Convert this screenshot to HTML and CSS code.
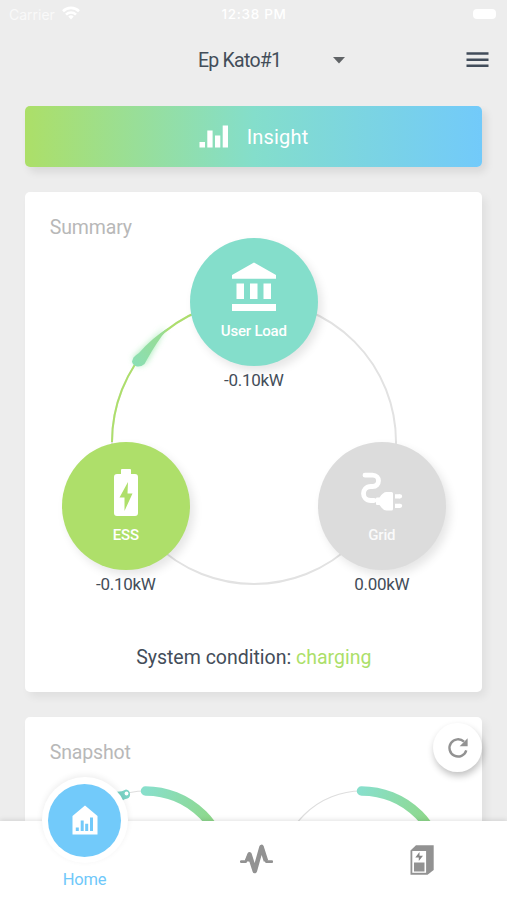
FILE: index.html
```html
<!DOCTYPE html>
<html lang="en">
<head>
<meta charset="utf-8">
<meta name="viewport" content="width=device-width, initial-scale=1">
<title>Energy Home</title>
<link rel="stylesheet" href="styles.css">
</head>
<body>
<div class="screen">
  <div class="status">
    <div class="carrier"><span>Carrier</span>
      <svg width="18" height="14" viewBox="0 0 18 14" fill="none" stroke="#fff" stroke-width="2.6"><path d="M1 5.2a11.4 11.4 0 0 1 16 0M4 8.6a7 7 0 0 1 10 0"/><path d="M6.3 10.6a3.8 3.8 0 0 1 5.4 0L9 13.6z" fill="#fff" stroke="none"/></svg>
    </div>
    <span class="time">12:38 PM</span>
    <span class="battery"></span>
  </div>
  <header class="header">
    <div class="site"><span>Ep Kato#1</span><svg width="12" height="7" viewBox="0 0 12 7"><path d="M0 0h12L6 6.5z" fill="#606366"/></svg></div>
    <svg class="menu" width="23" height="16" viewBox="0 0 23 16"><path d="M.5 1.6h22M.5 7.7h22M.5 13.8h22" stroke="#414c5a" stroke-width="2.5"/></svg>
  </header>
  <main class="content">
    <a class="insight">
      <svg width="30" height="23" viewBox="0 0 30 23" fill="#fff"><path d="M.5 17H6v5.4H.5zM8.3 5.4h5.3v17H8.3zM16 10.6h5.3v11.8H16zM23.7.4H29v22h-5.3z"/></svg>
      <span>Insight</span>
    </a>
    <section class="card summary">
      <h2>Summary</h2>
      <div class="flow">
        <svg class="ring" width="384" height="360" viewBox="0 0 384 360" fill="none">
          <defs><filter id="glow" x="-60%" y="-60%" width="220%" height="220%"><feGaussianBlur stdDeviation="3.2"/></filter>
          <linearGradient id="drop" x1="0" y1="1" x2="1" y2="0"><stop stop-color="#8adfb7"/><stop offset="1" stop-color="#9adc8c"/></linearGradient></defs>
          <circle cx="192" cy="204" r="142" stroke="#e2e2e2" stroke-width="2"/>
          <path d="M50 204A142 142 0 0 1 192 62" stroke="#addf6b" stroke-width="2"/>
          <path d="M71 120 104 89 84 125 75 128z" fill="#91e6a5" opacity=".8" filter="url(#glow)"/>
          <path d="M70 123.500L71.500 119.500Q73 117.500 77 115Q90 100 106 90Q94 105 85 121.500L82.500 126Q79 129 75 128.500Q70.500 127 70 123.500Z" fill="url(#drop)"/>
        </svg>
        <div class="node load">
          <div class="disc">
            <svg width="46" height="50" viewBox="0 0 46 50" fill="#fff"><path d="M23 .5 45 13v3.700H1V13zM5.500 21.500H13V37H5.500zM19 21.500h7.500V37H19zM32.500 21.500H40V37h-7.500zM1 42h44v7H1z"/></svg>
            <b>User Load</b>
          </div>
          <span>-0.10kW</span>
        </div>
        <div class="node ess">
          <div class="disc">
            <svg width="24" height="47" viewBox="0 0 24 47"><path d="M8 0h8q1 0 1 1v4h4q3 0 3 3v36q0 3-3 3H3q-3 0-3-3V8q0-3 3-3h4V1q0-1 1-1z" fill="#fff"/><path d="M14 13 5.500 28.500h5V42L18.500 24.500h-5z" fill="#aedf6a"/></svg>
            <b>ESS</b>
          </div>
          <span>-0.10kW</span>
        </div>
        <div class="node grid">
          <div class="disc">
            <svg width="44" height="40" viewBox="0 0 44 40"><path d="M5 4.200H12.500C20.500 4.200 20.500 15.500 12.500 15.500H11C1 15.500 1 29.500 11 29.500H14" fill="none" stroke="#fff" stroke-width="4.800" stroke-linecap="round"/><path d="M17 26.500h2.500q3.500-5.500 7-5.500h5q1.500 0 1.500 1.500V38q0 1.500-1.500 1.500h-5q-3.500 0-7-5.500H17q-1 0-1-1v-5.500q0-1 1-1z" fill="#fff"/><path d="M35 25.300h5M35 34.800h5" stroke="#fff" stroke-width="4.200"/><path d="M40 25.300h.1M40 34.800h.1" stroke="#fff" stroke-width="4.200" stroke-linecap="round"/></svg>
            <b>Grid</b>
          </div>
          <span>0.00kW</span>
        </div>
      </div>
      <p class="condition">System condition: <em>charging</em></p>
    </section>
    <section class="card snapshot">
      <h2>Snapshot</h2>
      <svg class="gauges" width="457" height="64" viewBox="0 0 457 64" fill="none">
        <defs><linearGradient id="g1" gradientUnits="userSpaceOnUse" x1="120" y1="8" x2="186" y2="44"><stop stop-color="#88dfcb"/><stop offset="1" stop-color="#8fd889"/></linearGradient>
        <linearGradient id="g2" gradientUnits="userSpaceOnUse" x1="336" y1="8" x2="402" y2="44"><stop stop-color="#88dfcb"/><stop offset="1" stop-color="#8fd889"/></linearGradient></defs>
        <circle cx="120.500" cy="90" r="81" stroke="#dedede" stroke-width="1.200"/>
        <circle cx="336.500" cy="90" r="81" stroke="#dedede" stroke-width="1.200"/>
        <path d="M120.500 9A81 81 0 0 1 201.500 90" stroke="url(#g1)" stroke-width="9.500" stroke-linecap="round"/>
        <path d="M336.500 9A81 81 0 0 1 417.500 90" stroke="url(#g2)" stroke-width="9.500" stroke-linecap="round"/>
        <path d="M88 9.500Q96 10.500 101 7.500A4.800 4.800 0 0 1 102.500 16.500Q97 17.500 91 24z" fill="#7bd3c6"/><circle cx="101.500" cy="11.500" r="1.900" fill="#fff"/>
      </svg>
      <button class="refresh" aria-label="Refresh"><svg width="22" height="22" viewBox="0 0 22 22" fill="none"><path d="M19.300 13.400A8.600 8.600 0 1 1 17 4.700" stroke="#929292" stroke-width="2.400"/><path d="M20.600 1.300v8h-8z" fill="#929292"/></svg></button>
    </section>
  </main>
  <nav class="tabs">
    <a class="tab home">
      <div class="bubble"><div class="dot">
        <svg width="26" height="30" viewBox="0 0 26 30"><path d="M13 .5 25.500 11v18.500H.5V11z" fill="#fff"/><path d="M3.800 22.500h3V26h-3zM8.700 15.500h3V26h-3zM13.200 18.800h3V26h-3zM18 12.500h3V26h-3z" fill="#72cafa"/></svg>
      </div></div>
      <span>Home</span>
    </a>
    <a class="tab pulse"><svg width="33" height="32" viewBox="0 0 33 32" fill="none"><path d="M1.200 18.600H6L9.300 11 14.800 28.500 21.800 3 26.300 18.600H32" stroke="#929292" stroke-width="2.600" stroke-linejoin="round" stroke-linecap="round"/><path d="M7 18 9.500 11.500 14.800 28 21.500 4 26 18" stroke="#929292" stroke-width="4.600" stroke-linejoin="round"/></svg></a>
    <a class="tab device"><svg width="24" height="30" viewBox="0 0 24 30"><path d="M.5 5.500 6 .3H23.700V25L17.500 29.700H.5z" fill="#929292"/><path d="M2.300 6h13.800v21.800H2.300z" fill="#fff"/><path d="M4 17.500h10.500v9H4z" fill="#929292"/><path d="M9.500 7 5.300 12.500H8.800V16L13 10.800H9.500z" fill="#858585"/></svg></a>
  </nav>
</div>
</body>
</html>
```
FILE: styles.css
```css
* { box-sizing: border-box; }
body { margin: 0; background: #ededed; font-family: Roboto, "Liberation Sans", sans-serif; color: #434d59; }
svg { display: block; flex: none; }
.screen { width: 507px; height: 900px; display: flex; flex-direction: column; overflow: hidden; }

.status { height: 28px; flex: none; display: grid; grid-template-columns: 1fr auto 1fr; align-items: center; padding: 0 11px 0 9px; color: #fff; font-family: Inter, sans-serif; font-size: 13px; }
.carrier { display: flex; align-items: center; gap: 7px; color: #f9f9f9; font-size: 14px; }
.carrier svg { margin-top: -2px; }
.time { font-weight: 500; font-size: 13.500px; letter-spacing: .7px; margin-left: 3px; }
.battery { justify-self: end; width: 23px; height: 10px; border-radius: 4px; background: #fff; }

.header { height: 78px; flex: none; display: flex; justify-content: space-between; padding: 20px 18px 0 198px; }
.site { width: 147px; height: 24px; display: flex; align-items: center; justify-content: space-between; font-size: 19.500px; letter-spacing: -.75px; }
.menu { margin-top: 4px; }

.content { height: 715px; flex: none; padding: 0 24.700px 0 25.300px; overflow: hidden; }
.insight { display: flex; align-items: center; justify-content: center; gap: 17.500px; height: 61px; border-radius: 5px; color: #fff; font-size: 20px; letter-spacing: .2px; background: linear-gradient(90deg, #acdf68, #84decb 50%, #72cafa); box-shadow: 4px 5px 8px rgba(0, 0, 0, .09); }
.card { position: relative; margin-top: 25px; border-radius: 5px; background: #fff; box-shadow: 4px 5px 8px rgba(0, 0, 0, .06); }
.card h2 { margin: 0; padding: 23px 24.500px 0; height: 46px; font-size: 19.500px; line-height: 25px; font-weight: 400; letter-spacing: -.15px; color: #b8b8b8; }
.summary { height: 500px; }

.flow { position: relative; width: 384px; height: 360px; margin: 0 auto; }
.ring { overflow: visible; }
.node { position: absolute; width: 128px; display: flex; flex-direction: column; align-items: center; gap: 4px; font-size: 17px; line-height: 20px; letter-spacing: -.3px; }
.load { left: 128px; top: 0; }
.ess { left: 0; top: 204px; }
.grid { left: 256px; top: 204px; }
.disc { width: 128px; height: 128px; border-radius: 50%; display: flex; flex-direction: column; align-items: center; color: #fff; box-shadow: 4px 5px 10px rgba(0, 0, 0, .1); }
.disc b { font-size: 15px; font-weight: 500; line-height: 20px; letter-spacing: -.2px; }
.load .disc { background: #84decb; padding-top: 24px; gap: 9px; }
.ess .disc { background: #aedf6a; padding-top: 27px; gap: 9px; }
.grid .disc { background: #dcdcdc; padding-top: 29px; gap: 14px; }
.grid b { color: #fafafa; }
.condition { margin: 47px 0 0; text-align: center; font-size: 19.500px; line-height: 25px; }
.condition em { font-style: normal; color: #acdf69; }

.snapshot { height: 160px; }
.gauges { margin-top: 19px; }
.refresh { position: absolute; right: 0; top: 6px; width: 49px; height: 49px; padding: 0; border: 0; border-radius: 50%; background: #fff; display: grid; place-items: center; box-shadow: 1px 4px 7px rgba(0, 0, 0, .24); }

.tabs { position: relative; height: 79px; flex: none; display: grid; grid-template-columns: repeat(3, 169px); background: #fff; box-shadow: 0 -1px 5px rgba(0, 0, 0, .12); }
.tab { display: flex; flex-direction: column; align-items: center; color: #6fc8fa; font-size: 16.500px; line-height: 20px; }
.bubble { width: 86px; height: 86px; margin-top: -44px; padding: 6.500px; border-radius: 50%; background: #fff; box-shadow: 0 -2px 6px rgba(0, 0, 0, .07); }
.dot { width: 73px; height: 73px; border-radius: 50%; background: #72cafa; display: grid; place-items: center; }
.home span { margin-top: 7px; letter-spacing: -.2px; }
.pulse svg { margin: 22px 0 0 6px; }
.device svg { margin: 24px 1px 0 0; }
```
